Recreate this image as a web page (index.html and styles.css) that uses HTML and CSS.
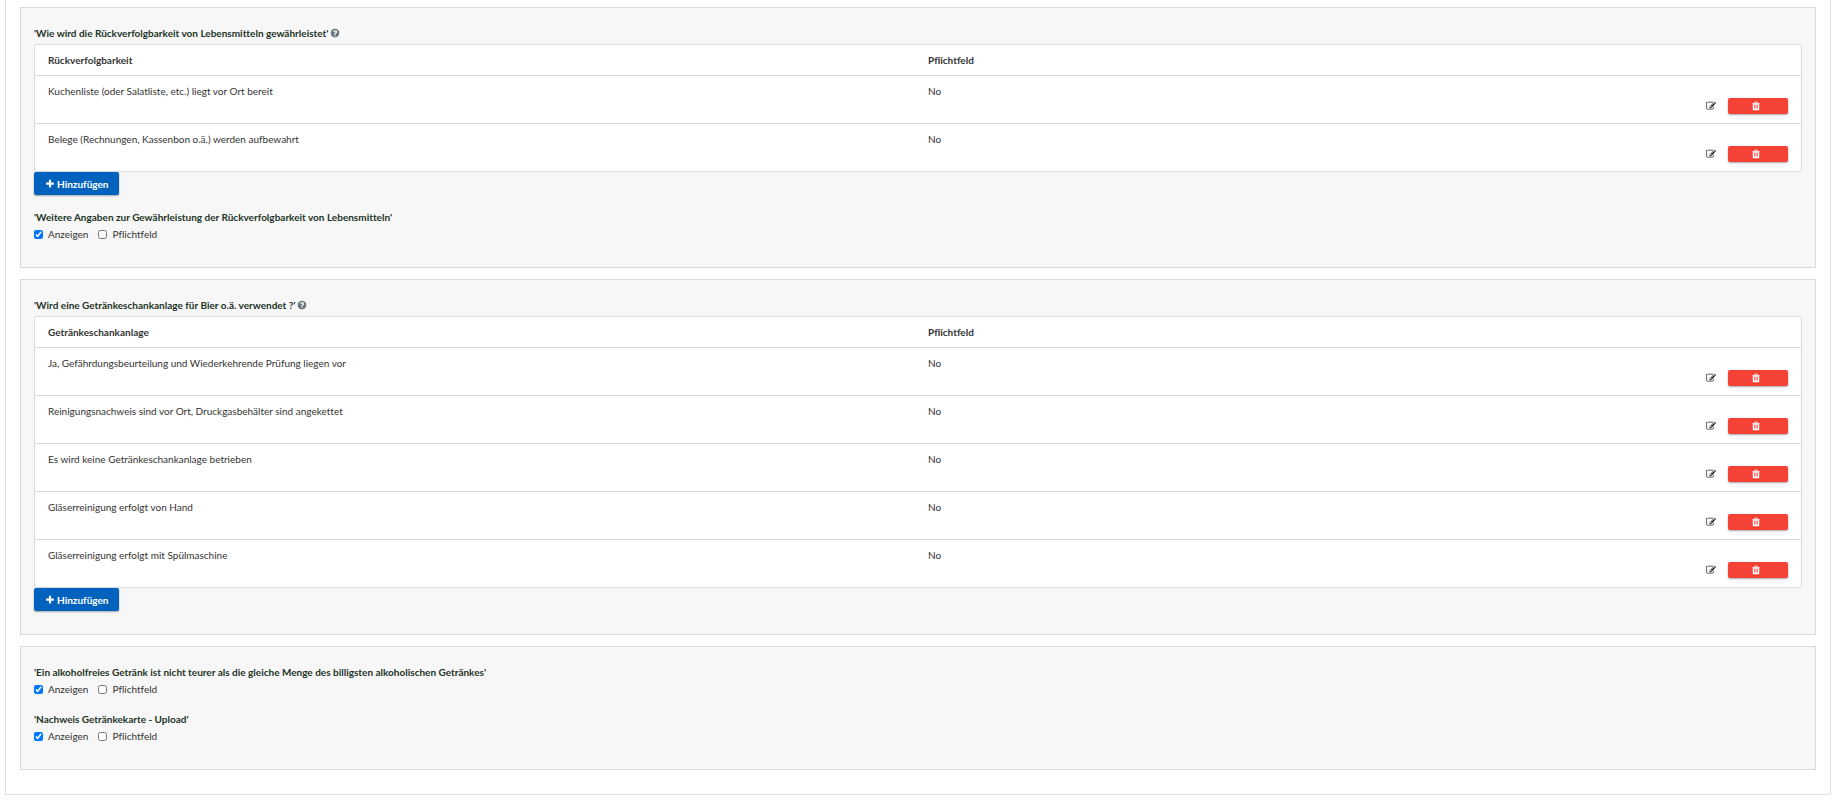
FILE: index.html
```html
<!DOCTYPE html>
<html lang="de">
<head>
  <meta charset="UTF-8" />
  <meta name="viewport" content="width=device-width, initial-scale=1.0"/>
  <title>Formular</title>
  <link rel="stylesheet" href="styles.css">
</head>
<body>
  <!-- Icons -->
  <svg class="sprite" aria-hidden="true">
    <symbol id="plus" viewBox="0 0 1792 1792"><path d="M1600 736v192q0 40-28 68t-68 28h-416v416q0 40-28 68t-68 28h-192q-40 0-68-28t-28-68v-416h-416q-40 0-68-28t-28-68v-192q0-40 28-68t68-28h416v-416q0-40 28-68t68-28h192q40 0 68 28t28 68v416h416q40 0 68 28t28 68z"/></symbol>
    <symbol id="trash" viewBox="0 0 1792 1792"><path d="M704 1376v-704q0-14-9-23t-23-9h-64q-14 0-23 9t-9 23v704q0 14 9 23t23 9h64q14 0 23-9t9-23zm256 0v-704q0-14-9-23t-23-9h-64q-14 0-23 9t-9 23v704q0 14 9 23t23 9h64q14 0 23-9t9-23zm256 0v-704q0-14-9-23t-23-9h-64q-14 0-23 9t-9 23v704q0 14 9 23t23 9h64q14 0 23-9t9-23zm-544-992h448l-48-117q-7-9-17-11h-317q-10 2-17 11zm928 32v64q0 14-9 23t-23 9h-96v948q0 83-47 143.500t-113 60.500h-832q-66 0-113-58.500t-47-141.500v-952h-96q-14 0-23-9t-9-23v-64q0-14 9-23t23-9h309l70-167q15-37 54-63t79-26h320q40 0 79 26t54 63l70 167h309q14 0 23 9t9 23z"/></symbol>
    <symbol id="edit" viewBox="0 0 1792 1792"><path d="M888 1184l116-116-152-152-116 116v56h96v96h56zm440-720q-16-16-33 1l-350 350q-17 17-1 33t33-1l350-350q17-17 1-33zm80 594v190q0 119-84.500 203.500t-203.500 84.500h-832q-119 0-203.500-84.500t-84.500-203.500v-832q0-119 84.500-203.500t203.500-84.500h832q63 0 117 25 15 7 18 23 3 17-9 29l-49 49q-14 14-32 8-23-6-45-6h-832q-66 0-113 47t-47 113v832q0 66 47 113t113 47h832q66 0 113-47t47-113v-126q0-13 9-22l64-64q15-15 35-7t20 29zm-96-738l288 288-672 672h-288v-288zm444 132l-92 92-288-288 92-92q28-28 68-28t68 28l152 152q28 28 28 68t-28 68z"/></symbol>
    <symbol id="help" viewBox="0 0 1792 1792"><path d="M1024 1376v-192q0-14-9-23t-23-9h-192q-14 0-23 9t-9 23v192q0 14 9 23t23 9h192q14 0 23-9t9-23zm256-672q0-88-55.500-163t-138.500-116-170-41q-243 0-371 213-15 24 8 42l132 100q7 6 19 6 16 0 25-12 53-68 86-92 34-24 86-24 48 0 85.500 26t37.500 59q0 38-20 61t-68 45q-63 28-115.500 86.500t-52.500 125.500v36q0 14 9 23t23 9h192q14 0 23-9t9-23q0-19 21.500-49.500t54.500-49.500q32-18 49-28.500t46-35 44.500-48 28-60.500 12.500-81zm384 192q0 209-103 385.500t-279.500 279.500-385.500 103-385.500-103-279.500-279.500-103-385.500 103-385.500 279.500-279.500 385.500-103 385.500 103 279.500 279.500 103 385.500z"/></symbol>
  </svg>

  <main class="page">
    <!-- Rückverfolgbarkeit -->
    <section class="panel">
      <div class="list">
        <h2 class="title">'Wie wird die Rückverfolgbarkeit von Lebensmitteln gewährleistet' <svg class="icon help"><use href="#help"/></svg></h2>
        <table>
          <thead>
            <tr><th>Rückverfolgbarkeit</th><th>Pflichtfeld</th></tr>
          </thead>
          <tbody>
            <tr>
              <td>Kuchenliste (oder Salatliste, etc.) liegt vor Ort bereit</td>
              <td><div class="cell">No <span class="actions"><button class="edit" aria-label="Bearbeiten"><svg class="icon"><use href="#edit"/></svg></button><button class="delete" aria-label="Löschen"><svg class="icon"><use href="#trash"/></svg></button></span></div></td>
            </tr>
            <tr>
              <td>Belege (Rechnungen, Kassenbon o.ä.) werden aufbewahrt</td>
              <td><div class="cell">No <span class="actions"><button class="edit" aria-label="Bearbeiten"><svg class="icon"><use href="#edit"/></svg></button><button class="delete" aria-label="Löschen"><svg class="icon"><use href="#trash"/></svg></button></span></div></td>
            </tr>
          </tbody>
        </table>
        <button class="add"><svg class="icon"><use href="#plus"/></svg> Hinzufügen</button>
      </div>
      <div class="field">
        <h2 class="title">'Weitere Angaben zur Gewährleistung der Rückverfolgbarkeit von Lebensmitteln'</h2>
        <div class="checks">
          <label><input type="checkbox" checked> Anzeigen</label>
          <label><input type="checkbox"> Pflichtfeld</label>
        </div>
      </div>
    </section>

    <!-- Getränkeschankanlage -->
    <section class="panel">
      <div class="list">
        <h2 class="title">'Wird eine Getränkeschankanlage für Bier o.ä. verwendet ?' <svg class="icon help"><use href="#help"/></svg></h2>
        <table>
          <thead>
            <tr><th>Getränkeschankanlage</th><th>Pflichtfeld</th></tr>
          </thead>
          <tbody>
            <tr>
              <td>Ja, Gefährdungsbeurteilung und Wiederkehrende Prüfung liegen vor</td>
              <td><div class="cell">No <span class="actions"><button class="edit" aria-label="Bearbeiten"><svg class="icon"><use href="#edit"/></svg></button><button class="delete" aria-label="Löschen"><svg class="icon"><use href="#trash"/></svg></button></span></div></td>
            </tr>
            <tr>
              <td>Reinigungsnachweis sind vor Ort, Druckgasbehälter sind angekettet</td>
              <td><div class="cell">No <span class="actions"><button class="edit" aria-label="Bearbeiten"><svg class="icon"><use href="#edit"/></svg></button><button class="delete" aria-label="Löschen"><svg class="icon"><use href="#trash"/></svg></button></span></div></td>
            </tr>
            <tr>
              <td>Es wird keine Getränkeschankanlage betrieben</td>
              <td><div class="cell">No <span class="actions"><button class="edit" aria-label="Bearbeiten"><svg class="icon"><use href="#edit"/></svg></button><button class="delete" aria-label="Löschen"><svg class="icon"><use href="#trash"/></svg></button></span></div></td>
            </tr>
            <tr>
              <td>Gläserreinigung erfolgt von Hand</td>
              <td><div class="cell">No <span class="actions"><button class="edit" aria-label="Bearbeiten"><svg class="icon"><use href="#edit"/></svg></button><button class="delete" aria-label="Löschen"><svg class="icon"><use href="#trash"/></svg></button></span></div></td>
            </tr>
            <tr>
              <td>Gläserreinigung erfolgt mit Spülmaschine</td>
              <td><div class="cell">No <span class="actions"><button class="edit" aria-label="Bearbeiten"><svg class="icon"><use href="#edit"/></svg></button><button class="delete" aria-label="Löschen"><svg class="icon"><use href="#trash"/></svg></button></span></div></td>
            </tr>
          </tbody>
        </table>
        <button class="add"><svg class="icon"><use href="#plus"/></svg> Hinzufügen</button>
      </div>
    </section>

    <!-- Getränke -->
    <section class="panel">
      <div class="field">
        <h2 class="title">'Ein alkoholfreies Getränk ist nicht teurer als die gleiche Menge des billigsten alkoholischen Getränkes'</h2>
        <div class="checks">
          <label><input type="checkbox" checked> Anzeigen</label>
          <label><input type="checkbox"> Pflichtfeld</label>
        </div>
      </div>
      <div class="field">
        <h2 class="title">'Nachweis Getränkekarte - Upload'</h2>
        <div class="checks">
          <label><input type="checkbox" checked> Anzeigen</label>
          <label><input type="checkbox"> Pflichtfeld</label>
        </div>
      </div>
    </section>
  </main>
</body>
</html>
```
FILE: styles.css
```css
* {
  box-sizing: border-box;
}
body {
  margin: 0;
  background: white;
  color: #333;
  font-family: Lato, "Open Sans", sans-serif;
  font-size: 10px;
  line-height: 14px;
  font-variant-ligatures: none;
}
.sprite {
  display: none;
}
.icon {
  width: 10px;
  height: 10px;
  fill: currentColor;
}
.page {
  display: flex;
  flex-direction: column;
  gap: 11px;
  margin: 0 6px 0 5px;
  padding: 7px 14px 24px;
  border: 1px solid #dee2e6;
  border-top: none;
}
.panel {
  padding: 18px 13px 10px;
  background: #f7f7f7;
  border: 1px solid #d9dadb;
}
.title {
  display: flex;
  align-items: center;
  gap: 2px;
  margin: 0;
  color: #1c3326;
  font-size: 10px;
  font-weight: bold;
  line-height: 14px;
}
.help {
  color: #6c757d;
}

/* Lists */
.list {
  margin-bottom: 13px;
}
table {
  width: 100%;
  margin-top: 4px;
  background: white;
  border: 1px solid #d9dadb;
  border-radius: 3px;
  border-spacing: 0;
  table-layout: fixed;
}
th, td {
  padding: 8px 13px 8px 10px;
  text-align: left;
  vertical-align: top;
}
th:first-child, td:first-child {
  padding-left: 13px;
}
td {
  height: 48px;
  border-top: 1px solid #d9dadb;
}
.cell {
  display: flex;
  justify-content: space-between;
}
.actions {
  display: flex;
  align-items: center;
  gap: 12px;
  padding-top: 14px;
}
button {
  padding: 0;
  border: none;
  font: inherit;
  cursor: pointer;
}
.edit {
  display: flex;
  background: none;
  color: #333;
}
.delete {
  display: flex;
  align-items: center;
  justify-content: center;
  width: 60px;
  height: 16px;
  padding-right: 4px;
  background: #f44336;
  color: white;
  border-radius: 2px;
  box-shadow: 0 1px 2px rgba(0, 0, 0, 0.35);
}
.add {
  display: flex;
  align-items: center;
  gap: 2px;
  height: 23px;
  padding: 0 11px;
  background: #0062bd;
  color: white;
  font-weight: bold;
  border-radius: 2px;
  box-shadow: 0 1px 2px rgba(0, 0, 0, 0.35);
}

/* Checkboxes */
.field {
  margin-bottom: 16px;
}
.list + .field {
  margin-top: 15px;
}
.checks {
  display: flex;
  gap: 10px;
  margin-top: 3px;
}
.checks label {
  display: flex;
  align-items: center;
  gap: 5px;
}
.checks input {
  width: 9px;
  height: 9px;
  margin: 0;
}
```
